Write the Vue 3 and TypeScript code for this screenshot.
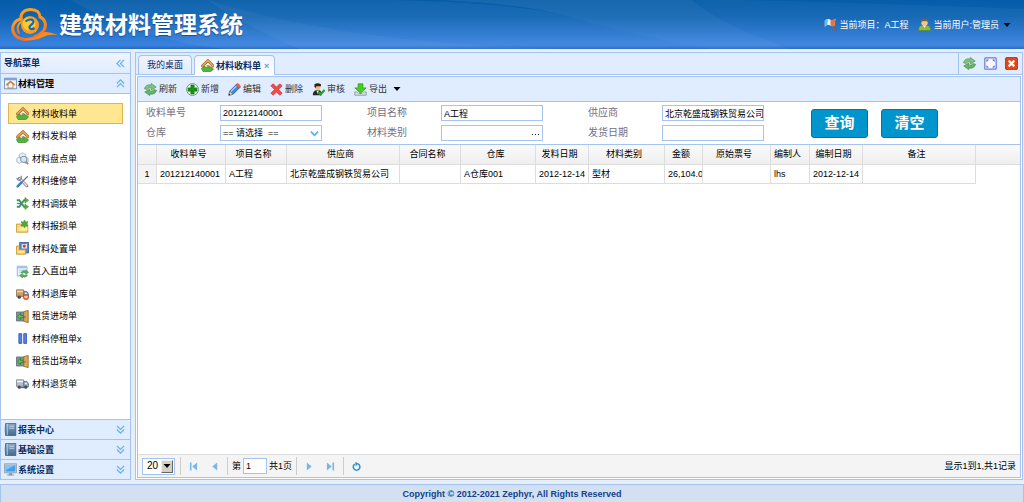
<script setup lang="ts">
import { ref } from 'vue'

interface Entry { icon: string; text: string }
interface Column { title: string; width: number; value: string }

const menu: Entry[] = [
  { icon: 'house', text: '材料收料单' },
  { icon: 'house', text: '材料发料单' },
  { icon: 'boxes', text: '材料盘点单' },
  { icon: 'tools', text: '材料维修单' },
  { icon: 'shuffle', text: '材料调拨单' },
  { icon: 'folderstar', text: '材料报损单' },
  { icon: 'folderbook', text: '材料处置单' },
  { icon: 'sheet', text: '直入直出单' },
  { icon: 'truckout', text: '材料退库单' },
  { icon: 'door', text: '租赁进场单' },
  { icon: 'pause', text: '材料停租单x' },
  { icon: 'door', text: '租赁出场单x' },
  { icon: 'truck', text: '材料退货单' },
]

const sections: Entry[] = [
  { icon: 'book', text: '报表中心' },
  { icon: 'book', text: '基础设置' },
  { icon: 'monitor', text: '系统设置' },
]

const actions: Entry[] = [
  { icon: 'refresh', text: '刷新' },
  { icon: 'add', text: '新增' },
  { icon: 'pencil', text: '编辑' },
  { icon: 'cross', text: '删除' },
  { icon: 'audit', text: '审核' },
  { icon: 'export', text: '导出' },
]

const columns: Column[] = [
  { title: '收料单号', width: 69, value: '201212140001' },
  { title: '项目名称', width: 61, value: 'A工程' },
  { title: '供应商', width: 113, value: '北京乾盛成钢铁贸易公司' },
  { title: '合同名称', width: 61, value: '' },
  { title: '仓库', width: 75, value: 'A仓库001' },
  { title: '发料日期', width: 53, value: '2012-12-14' },
  { title: '材料类别', width: 76, value: '型材' },
  { title: '金额', width: 38, value: '26,104.0' },
  { title: '原始票号', width: 68, value: '' },
  { title: '编制人', width: 39, value: 'lhs' },
  { title: '编制日期', width: 53, value: '2012-12-14' },
  { title: '备注', width: 113, value: '' },
]

const selected = ref(0)
const code = ref('201212140001')
const project = ref('A工程')
const supplier = ref('北京乾盛成钢铁贸易公司')
const category = ref('')
const shipDate = ref('')
const pageNo = ref('1')

function clearForm(): void {
  code.value = ''
  project.value = ''
  supplier.value = ''
  category.value = ''
  shipDate.value = ''
}
</script>

<template>
  <div class="page">
    <svg class="defs" aria-hidden="true">
      <defs>
        <linearGradient id="g-logo" x1="0" y1="0" x2="0" y2="1">
          <stop offset="0" stop-color="#ffa01c" /><stop offset="1" stop-color="#f5701a" />
        </linearGradient>
        <linearGradient id="g-book" x1="0" y1="0" x2="0" y2="1">
          <stop offset="0" stop-color="#86a9c8" /><stop offset="1" stop-color="#44698f" />
        </linearGradient>
      </defs>
      <symbol id="i-house" viewBox="0 0 16 16">
        <path d="M3.500 8v6.500h10V8l-5-4.500z" fill="#fdf6e6" stroke="#c9a06a" />
        <path d="M1.500 8.500L8.500 2l6.500 6.500" fill="none" stroke="#a9692a" stroke-width="3.400" stroke-linecap="round" />
        <path d="M1.500 8.500L8.500 2l6.500 6.500" fill="none" stroke="#e3a55d" stroke-width="1.800" stroke-linecap="round" />
        <path d="M7 7.500h3v2.500H7z" fill="#c08a5c" />
        <path d="M.500 11.500l4.500-3v2h5v-2l5.500 3.800-3.500 3-9.500.2z" fill="#55b441" stroke="#2f8a27" stroke-width=".8" />
      </symbol>
      <symbol id="i-home" viewBox="0 0 16 16">
        <path d="M.5 1.500h15v13H.5z" fill="#eaf2fb" stroke="#5b80ad" />
        <path d="M.5 1.500h15v2.500H.5z" fill="#7ba3d4" />
        <path d="M5 9v4.500h6V9" fill="#fff" stroke="#b27c3c" />
        <path d="M3 10l5-4.500 5 4.500" fill="none" stroke="#c8803a" stroke-width="2" />
      </symbol>
      <symbol id="i-boxes" viewBox="0 0 16 16">
        <path d="M4 3l4-2 4 2v4l-4 2-4-2zM1 8l3-2 4 2v4l-4 2-3-2zM8 8l4-2 3 2v4l-3 2-4-2z" fill="#eef1f5" stroke="#9ba6b5" stroke-width=".9" />
        <circle cx="9.500" cy="9" r="3.800" fill="#cfe7fa" stroke="#8299b5" stroke-width="1.300" />
        <path d="M12 12l3 3" stroke="#b4824b" stroke-width="2" />
      </symbol>
      <symbol id="i-tools" viewBox="0 0 16 16">
        <path d="M4 4l9.500 9.500" stroke="#7e8894" stroke-width="3.400" stroke-linecap="round" />
        <path d="M4 4l9.500 9.500" stroke="#e1e6eb" stroke-width="1.700" />
        <path d="M1 3.500q1 4 4 2.500l1.500-1.500V1" fill="none" stroke="#87929f" stroke-width="1.700" />
        <path d="M14.500 1.500L7 9" stroke="#68737f" stroke-width="1.500" />
        <path d="M6.500 9.500L2 14" stroke="#3c7bd2" stroke-width="3" stroke-linecap="round" />
      </symbol>
      <symbol id="i-shuffle" viewBox="0 0 16 16">
        <path d="M1 4h3l6 8h2M1 12h3l6-8h2" fill="none" stroke="#3c9161" stroke-width="2.200" />
        <path d="M11 .500l4.500 3.500L11 7.500zM11 8.500l4.500 3.500-4.500 3.500z" fill="#59b83c" stroke="#2e7d28" stroke-width=".6" />
        <path d="M1 8h6" stroke="#5277bd" stroke-width="1.500" />
      </symbol>
      <symbol id="i-folderstar" viewBox="0 0 16 16">
        <path d="M.5 15V5h5.500l1 2h7.500v8z" fill="#ffda73" stroke="#c98e29" />
        <path d="M3 9h11v4H3z" fill="#fff0a9" />
        <path d="M10.500 0l1.300 2.500 3-.4-1.300 2.700 1.300 2.700-3-.4-1.300 2.500-1.300-2.500-3 .4 1.300-2.700-1.300-2.700 3 .4z" fill="#4fad3b" stroke="#2c8329" stroke-width=".6" />
      </symbol>
      <symbol id="i-folderbook" viewBox="0 0 16 16">
        <path d="M4.500.5h11v13h-11z" fill="#5587cf" stroke="#2e549c" />
        <path d="M7 2.500h6.500V8H7z" fill="#e5ecf9" /><circle cx="10.200" cy="5" r="2" fill="#df3c35" />
        <path d="M.5 15V5H4v4.500h8V15z" fill="#ffd76b" stroke="#c38a2d" />
        <path d="M3 12h7" stroke="#fff1b5" stroke-width="2" />
      </symbol>
      <symbol id="i-sheet" viewBox="0 0 16 16">
        <path d="M1.500 1.500h12v12h-12z" fill="#e4effb" stroke="#8eabd2" />
        <path d="M2 3h11" stroke="#9ec0e9" stroke-width="2" />
        <path d="M4 6.500h7M4 9h3" stroke="#b2c7df" />
        <path d="M6 9.500q3-4 6-2V6l3.500 3-3.500 2.500V10q-3-1.500-6-.5zM14 13q-3 3-6 1.500V16l-3.500-3L8 10.500V12q3 1.500 6 1z" fill="#59b651" stroke="#278838" stroke-width=".6" />
      </symbol>
      <symbol id="i-truck" viewBox="0 0 16 16">
        <path d="M.5 3.500h9v8h-9z" fill="#b9bec5" stroke="#747d89" />
        <path d="M1 5.500h8" stroke="#eef0f3" stroke-width="2" />
        <path d="M9.500 5.500h4l2 3v3.500h-6z" fill="#8fa9c9" stroke="#566f91" />
        <path d="M11 7h2l1 2h-3z" fill="#e6f3ff" />
        <circle cx="4" cy="12.500" r="2" fill="#454a52" /><circle cx="12" cy="12.500" r="2" fill="#454a52" />
        <path d="M5 13h5" stroke="#666" stroke-width="1.500" />
      </symbol>
      <symbol id="i-truckout" viewBox="0 0 16 16">
        <path d="M.5 3.500h9v8h-9z" fill="#d49b63" stroke="#85684c" />
        <path d="M1 5.500h8" stroke="#f3d2a9" stroke-width="2" />
        <path d="M9.500 5.500h4l2 3v3.500h-6z" fill="#7ca4dc" stroke="#486da6" />
        <path d="M11 7h2l1 2h-3z" fill="#e4f2ff" />
        <circle cx="4" cy="12.500" r="2" fill="#454a52" />
        <circle cx="12.300" cy="12.300" r="3.400" fill="#f06c38" stroke="#c03d1c" stroke-width=".7" />
        <path d="M10.300 12.300h4" stroke="#fff" stroke-width="1.500" />
      </symbol>
      <symbol id="i-door" viewBox="0 0 16 16">
        <path d="M.5 2.500h9.500v11H.5z" fill="#83909e" stroke="#5d6872" />
        <path d="M9.500 2l5.500-1.500v15l-5.500-1.500z" fill="#dba65d" stroke="#976125" />
        <circle cx="11" cy="8.500" r=".8" fill="#6b4012" />
        <path d="M1.500 8l4-4v2.500H9v3H5.500V12z" fill="#5fc047" stroke="#22762a" stroke-width=".8" />
      </symbol>
      <symbol id="i-pause" viewBox="0 0 16 16">
        <path d="M3.500 2h3.500v12H3.500zM9.500 2H13v12H9.500z" fill="#5a80e0" stroke="#2e51b4" />
      </symbol>
      <symbol id="i-book" viewBox="0 0 16 16">
        <path d="M2 .500h12.500v15H2q-1-7 0-15z" fill="url(#g-book)" stroke="#3f5e7d" />
        <path d="M4 1v14" stroke="#c9dbea" /><path d="M6.500 4h6M6.500 6.500h6" stroke="#cfe0ee" />
      </symbol>
      <symbol id="i-monitor" viewBox="0 0 16 16">
        <path d="M.5 1h15v11H.5z" fill="#c9d3dc" stroke="#8996a3" />
        <path d="M2 2.500h12v8H2z" fill="#3da1f2" /><path d="M2 2.500h12L2 9z" fill="#7cc6fa" />
        <path d="M6 12.500h4v1.500h2v1.500H4V14h2z" fill="#8b9398" />
      </symbol>
      <symbol id="i-refresh" viewBox="0 0 16 16">
        <path d="M.5 7q2-6 8.500-4.500V.500L15 5 9 8.500V6Q5 5 4 8z" fill="#7dc579" stroke="#4a9651" stroke-width=".8" />
        <path d="M15.500 9q-2 6-8.500 4.500v2L1 11l6-3.500V10q4 1 5-2z" fill="#66b565" stroke="#3f8b4a" stroke-width=".8" />
      </symbol>
      <symbol id="i-add" viewBox="0 0 16 16">
        <circle cx="8" cy="8" r="7.300" fill="#eff8ed" stroke="#4b8a4a" stroke-width="1" />
        <path d="M6 2.500h4V6h3.500v4H10v3.500H6V10H2.500V6H6z" fill="#159415" stroke="#086a09" stroke-width=".7" />
      </symbol>
      <symbol id="i-pencil" viewBox="0 0 16 16">
        <path d="M1 15l1-5L10.500 1.500l4 4L6 14z" fill="#3d8ae4" stroke="#2157a3" />
        <path d="M3.500 10.500l8-8" stroke="#a7d0fa" stroke-width="1.500" />
        <path d="M1 15l1-5 4 4z" fill="#f6d8a2" stroke="#8b6942" stroke-width=".6" />
        <path d="M9.500 2.500l2-2q2 0 4 4l-2 2z" fill="#ed6146" stroke="#a73e30" stroke-width=".6" />
        <path d="M1 15l.5-2 1.500 1.500z" fill="#222" />
      </symbol>
      <symbol id="i-cross" viewBox="0 0 16 16">
        <path d="M1 3.500L4 1l4 4 4-4 3 2.500L10.500 8l4.500 4.500-3 2.500-4-4-4 4-3-2.500L5.500 8z" fill="#f34a48" stroke="#d3302e" stroke-width=".8" />
      </symbol>
      <symbol id="i-audit" viewBox="0 0 16 16">
        <path d="M1 15q0-5 4-6h4q3 1 3 6z" fill="#282828" />
        <circle cx="7" cy="5" r="3.500" fill="#f0bd81" />
        <path d="M3 5V1.500q4-2.500 8 0V4H5v2z" fill="#302216" />
        <path d="M5.500 9.500l1.500 4 1.500-4z" fill="#fff" />
        <path d="M7.500 11l3 3L15.500 8.500" fill="none" stroke="#29a42b" stroke-width="2.800" />
      </symbol>
      <symbol id="i-export" viewBox="0 0 16 16">
        <path d="M1 11h3l2 2h4l2-2h3v4H1z" fill="#dce1e2" stroke="#849092" />
        <path d="M5 1h6v5h4l-7 6.500L1 6h4z" fill="#45ce1a" stroke="#259411" stroke-width=".8" />
      </symbol>
      <symbol id="i-full" viewBox="0 0 16 16">
        <rect x="1" y="1" width="14" height="14" rx="1" fill="#f5f8ff" stroke="#6b7ad6" stroke-width="1.500" />
        <path d="M3 6V3h3zM10 3h3v3zM13 10v3h-3zM6 13H3v-3z" fill="#4658b9" />
      </symbol>
      <symbol id="i-close" viewBox="0 0 16 16">
        <rect x=".5" y=".5" width="15" height="15" rx="2" fill="#dd481d" stroke="#a22c0c" />
        <path d="M4.500 4.500l7 7M11.500 4.500l-7 7" stroke="#fff" stroke-width="2.800" />
      </symbol>
      <symbol id="i-flag" viewBox="0 0 16 16">
        <path d="M14 1l-2 14.500" stroke="#a4582a" stroke-width="2" />
        <path d="M1 3q4-3 7-1t6-1l-1 8q-3 2-6 0t-6 2z" fill="#edf3fc" />
        <path d="M8 2q3 1 6-1l-1 8q-3 2-5 0z" fill="#e57348" /><path d="M1 3q2-1.500 4-1.500L4 8.500 1 10z" fill="#65bff1" />
      </symbol>
      <symbol id="i-user" viewBox="0 0 16 16">
        <path d="M.5 15.500q0-6 5-6.500h5q5 .5 5 6.500z" fill="#8cba45" stroke="#5c8229" stroke-width=".8" />
        <path d="M6 9h4l-2 3z" fill="#fff" />
        <circle cx="8" cy="5.500" r="4" fill="#f0c797" />
        <path d="M3.700 5.500Q3.500.5 8 .500t4.300 5L11 4H5.500z" fill="#8a5c34" />
      </symbol>
      <symbol id="i-up" viewBox="0 0 10 10">
        <path d="M1 5l4-4 4 4M1 9l4-4 4 4" fill="none" stroke="#64b0ea" stroke-width="1.300" />
      </symbol>
      <symbol id="i-down" viewBox="0 0 10 10">
        <path d="M1 1l4 4 4-4M1 5l4 4 4-4" fill="none" stroke="#64b0ea" stroke-width="1.300" />
      </symbol>
      <symbol id="i-left" viewBox="0 0 10 10">
        <path d="M5 1L1 5l4 4M9 1L5 5l4 4" fill="none" stroke="#64b0ea" stroke-width="1.300" />
      </symbol>
      <symbol id="i-caret" viewBox="0 0 8 8"><path d="M.5 2h7L4 6z" fill="#000" /></symbol>
      <symbol id="i-first" viewBox="0 0 10 10"><path d="M1 .500h1.800v9H1zM9 .500v9L3.500 5z" fill="#79b9e9" /></symbol>
      <symbol id="i-prev" viewBox="0 0 10 10"><path d="M8 .500v9L2.500 5z" fill="#79b9e9" /></symbol>
      <symbol id="i-next" viewBox="0 0 10 10"><path d="M2 .500v9L7.500 5z" fill="#79b9e9" /></symbol>
      <symbol id="i-last" viewBox="0 0 10 10"><path d="M7.200.500H9v9H7.200zM1 .500v9L6.500 5z" fill="#79b9e9" /></symbol>
      <symbol id="i-reload" viewBox="0 0 10 10">
        <path d="M7 2.200A3.700 3.700 0 1 1 3 2.300" fill="none" stroke="#2e90d5" stroke-width="1.700" />
        <path d="M3.500 0l4 1.800L4 4.600z" fill="#2e90d5" />
      </symbol>
    </svg>

    <header class="banner">
      <svg class="waves" viewBox="0 0 1024 49" preserveAspectRatio="none" aria-hidden="true">
        <g fill="#fff">
          <path d="M392 0Q500 2 560 14Q630 36 710 49H300Q240 24 207 0z" opacity=".05" />
          <path d="M560 14Q630 36 710 49H790Q720 24 692 0H440Q510 3 560 14z" opacity=".07" />
          <path d="M692 0Q720 24 790 49H1024V9Q850 2 740 0z" opacity=".04" />
          <path d="M0 0H70Q110 22 150 34T225 49H305Q235 24 207 0H60z" opacity=".05" />
          <path d="M207 0Q235 24 305 49H560Q350 44 207 0z" opacity=".04" />
        </g>
      </svg>
      <svg class="logo" viewBox="0 0 48 34" aria-hidden="true">
        <g fill="none" stroke="url(#g-logo)" stroke-linecap="round">
          <path d="M10 11C9 5 14 1.500 19.500 1.500 26 1.500 29 5 29 9c5 2 7 8 4 13-2 3-5 5-9 6.500" stroke-width="3" />
          <path d="M10 11C4 12 0 18 2.500 24.500 5 31 14 33 22 30" stroke-width="3" />
          <path d="M13 13c-6 1-8 7-5 12" stroke-width="2" />
        </g>
        <path d="M10 30q12 3 20-5 5-3 17 2-9-1-15 2-10 6-22 1z" fill="#fb8a1c" />
        <circle cx="19" cy="17" r="9" fill="#fb9a18" />
        <circle cx="18" cy="16" r="6.500" fill="#ffc928" />
        <path d="M14.500 13.500q4-3.500 7-1.500 2.500 2-1.500 5-2.500 2-1 3.500t4.500-.5" fill="none" stroke="#1768b8" stroke-width="2.200" />
      </svg>
      <h1>建筑材料管理系统</h1>
      <div class="account">
        <span class="who"><svg class="ico"><use href="#i-flag" /></svg>当前项目：A工程</span>
        <button class="who" type="button">
          <svg class="ico"><use href="#i-user" /></svg>当前用户:管理员<svg class="caret"><use href="#i-caret" /></svg>
        </button>
      </div>
    </header>

    <div class="body">
      <aside class="side">
        <div class="side-head navy">导航菜单<button type="button" aria-label="收起"><svg class="arrow"><use href="#i-left" /></svg></button></div>
        <div class="side-head">
          <svg class="ico"><use href="#i-home" /></svg>材料管理
          <button type="button" aria-label="折叠"><svg class="arrow"><use href="#i-up" /></svg></button>
        </div>
        <nav class="menu">
          <a v-for="(m, i) in menu" :key="m.text" href="#" :class="{ on: i === selected }" @click.prevent="selected = i">
            <svg class="ico"><use :href="'#i-' + m.icon" /></svg>{{ m.text }}
          </a>
        </nav>
        <div v-for="s in sections" :key="s.text" class="side-head foot navy">
          <svg class="ico"><use :href="'#i-' + s.icon" /></svg>{{ s.text }}
          <button type="button" aria-label="展开"><svg class="arrow"><use href="#i-down" /></svg></button>
        </div>
      </aside>

      <main class="main">
        <div class="tabbar">
          <div class="tabs">
            <button class="tab" type="button">我的桌面</button>
            <button class="tab active" type="button">
              <svg class="ico"><use href="#i-house" /></svg>材料收料单<span class="x">×</span>
            </button>
          </div>
          <div class="win">
            <button type="button" aria-label="刷新"><svg class="ico"><use href="#i-refresh" /></svg></button>
            <button type="button" aria-label="全屏"><svg class="ico"><use href="#i-full" /></svg></button>
            <button type="button" aria-label="关闭"><svg class="ico"><use href="#i-close" /></svg></button>
          </div>
        </div>

        <section class="panel">
          <div class="toolbar">
            <button v-for="a in actions" :key="a.text" type="button">
              <svg class="ico"><use :href="'#i-' + a.icon" /></svg>{{ a.text }}<svg v-if="a.icon === 'export'" class="caret"><use href="#i-caret" /></svg>
            </button>
          </div>

          <form class="query" @submit.prevent>
            <div class="fields">
              <label for="code">收料单号</label><input id="code" v-model="code" type="text">
              <label class="next" for="project">项目名称</label><input id="project" v-model="project" type="text">
              <label class="next" for="supplier">供应商</label><input id="supplier" v-model="supplier" type="text">
              <label for="store">仓库</label>
              <div class="combo">
                <select id="store"><option>==&nbsp;请选择&nbsp;&nbsp;==</option></select>
                <svg viewBox="0 0 10 10" aria-hidden="true"><path d="M1 3l4 4 4-4" /></svg>
              </div>
              <label class="next" for="category">材料类别</label>
              <div class="combo">
                <input id="category" v-model="category" type="text">
                <button class="dots" type="button" aria-label="选择类别"><i /><i /><i /></button>
              </div>
              <label class="next" for="date">发货日期</label><input id="date" v-model="shipDate" type="text">
            </div>
            <div class="buttons">
              <button type="submit">查询</button>
              <button type="button" @click="clearForm">清空</button>
            </div>
          </form>

          <div class="grid">
            <table>
              <colgroup>
                <col class="num-col">
                <col v-for="c in columns" :key="c.title" :style="{ width: c.width + 'px' }">
                <col>
              </colgroup>
              <thead>
                <tr><th /><th v-for="c in columns" :key="c.title">{{ c.title }}</th><th class="rest" /></tr>
              </thead>
              <tbody>
                <tr><td class="num">1</td><td v-for="c in columns" :key="c.title">{{ c.value }}</td><td class="rest" /></tr>
              </tbody>
            </table>
          </div>

          <div class="pager">
            <div class="size">
              <select aria-label="每页条数"><option>20</option></select>
              <span class="drop"><svg class="caret"><use href="#i-caret" /></svg></span>
            </div>
            <i class="sep" />
            <button type="button" aria-label="首页"><svg class="arrow"><use href="#i-first" /></svg></button>
            <button type="button" aria-label="上一页"><svg class="arrow"><use href="#i-prev" /></svg></button>
            <i class="sep" />
            <div class="jump"><label for="page">第</label><input id="page" v-model="pageNo" type="text"><span>共1页</span></div>
            <i class="sep" />
            <button type="button" aria-label="下一页"><svg class="arrow"><use href="#i-next" /></svg></button>
            <button type="button" aria-label="末页"><svg class="arrow"><use href="#i-last" /></svg></button>
            <i class="sep" />
            <button type="button" aria-label="重新加载"><svg class="arrow"><use href="#i-reload" /></svg></button>
            <span class="info">显示1到1,共1记录</span>
          </div>
        </section>
      </main>
    </div>

    <footer class="bottom">Copyright © 2012-2021 Zephyr, All Rights Reserved</footer>
  </div>
</template>

<style>
html, body, #app { height: 100%; margin: 0; }
</style>

<style scoped>
* { box-sizing: border-box; }
.page {
  min-height: 100%;
  display: flex;
  flex-direction: column;
  background: #e6eef8;
  color: #000;
  font: 9px/14px "Liberation Sans", "Noto Sans CJK SC", sans-serif;
}
.defs { position: absolute; width: 0; height: 0; }
button, input, select { font: inherit; color: inherit; margin: 0; padding: 0; border: 0; background: none; border-radius: 0; outline: 0; }
button { display: inline-flex; align-items: center; cursor: pointer; white-space: nowrap; }
.ico { width: 13px; height: 13px; flex: none; }
.arrow { width: 9px; height: 9px; flex: none; display: block; }
.caret { width: 8px; height: 8px; flex: none; }

.banner {
  position: relative;
  height: 49px;
  display: flex;
  align-items: center;
  padding: 0 13px 0 11px;
  background: linear-gradient(#055ca8, #0f64b4 35%, #3a83e0 92%, #2468bd);
  color: #fff;
}
.waves { position: absolute; inset: 0; width: 100%; height: 100%; }
.logo { position: relative; width: 48px; height: 34px; }
h1 { position: relative; margin: 0; font-size: 23px; line-height: 32px; font-weight: 700; padding-top: 1px; white-space: nowrap; text-shadow: 0 1px 1px #134f94; }
.account { position: relative; margin-left: auto; display: flex; align-items: center; gap: 10px; }
.who { display: flex; align-items: center; gap: 2px; }
.who .caret { margin-left: 2px; }

.body { flex: 1; display: flex; gap: 4px; padding: 3px 1px 4px 0; }
.side { width: 131px; flex: none; display: flex; flex-direction: column; background: #fff; border: 1px solid #a4c3ee; }
.side-head {
  height: 20px;
  display: flex;
  align-items: center;
  gap: 1px;
  padding: 0 5px 0 3px;
  font-weight: 700;
  background: #e0ecff;
  border-bottom: 1px solid #a4c3ee;
}
.side-head:first-child { height: 21px; background: linear-gradient(#eff5ff, #e0ecff); }
.side-head button { margin-left: auto; }
.side-head.foot { border-bottom: 0; border-top: 1px solid #a4c3ee; }
.navy { color: #0e2d5f; }
.menu { flex: 1; padding: 9px 7px 25px; display: flex; flex-direction: column; justify-content: space-between; }
.menu a {
  height: 21px;
  display: flex;
  align-items: center;
  gap: 3px;
  padding-left: 7px;
  color: #000;
  text-decoration: none;
  border: 1px solid transparent;
}
.menu a.on { background: #ffe690; border-color: #e0b54c; }

.main { flex: 1; min-width: 0; display: flex; flex-direction: column; background: #fff; border: 1px solid #a4c3ee; }
.tabbar { height: 22px; display: flex; background: #e0ecff; border-bottom: 1px solid #a4c3ee; }
.tabs { flex: 1; display: flex; align-items: flex-end; gap: 2px; padding-left: 2px; }
.tab {
  height: 19px;
  padding: 0 8px;
  color: #0e2d5f;
  border: 1px solid #a4c3ee;
  border-bottom: 0;
  border-radius: 4px 4px 0 0;
  background: linear-gradient(#eff5ff, #e0ecff);
}
.tab.active { height: 20px; margin-bottom: -1px; padding: 0 5px 0 6px; gap: 2px; font-weight: 700; background: linear-gradient(#eff5ff, #fff); }
.tab .x { margin-left: 1px; color: #6f9bd1; }
.win { display: flex; align-items: center; gap: 8px; padding: 0 4px; border-left: 1px solid #a4c3ee; }
.panel { flex: 1; margin: 1px; display: flex; flex-direction: column; border: 1px solid #a4c3ee; }
.toolbar { height: 25px; display: flex; align-items: center; gap: 9px; padding-left: 6px; color: #333; background: #e0ecff; border-bottom: 1px solid #a4c3ee; }
.toolbar button { gap: 2px; }
.toolbar .caret { margin-left: 4px; }

.query { display: flex; align-items: center; gap: 47px; padding: 3px 0 3px 8px; }
.fields { display: grid; grid-template-columns: 74px 102px 119px 102px 119px 102px; row-gap: 4px; align-items: center; }
.fields label { font-size: 10px; line-height: 16px; color: #776e80; }
.fields .next { padding-left: 45px; }
.fields input, .fields select { display: block; width: 100%; height: 16px; min-width: 0; padding: 0 0 0 2px; background: #fff; border: 1px solid #a4c3ee; appearance: none; }
.combo { position: relative; height: 16px; }
.combo svg { position: absolute; right: 3px; top: 4px; width: 9px; height: 9px; fill: none; stroke: #5eaee8; stroke-width: 2; pointer-events: none; }
.dots { position: absolute; right: 4px; top: 2px; height: 14px; gap: 2px; }
.dots i { width: 1px; height: 1px; background: #222; }
.buttons { display: flex; gap: 13px; }
.buttons button { justify-content: center; width: 57px; height: 29px; font-size: 15px; font-weight: 700; color: #fff; background: #0095cd; border: 1px solid #0076a3; border-radius: 3px; }

.grid { flex: 1; border-top: 1px solid #a4c3ee; }
table { width: 100%; table-layout: fixed; border-collapse: separate; border-spacing: 0; }
.num-col { width: 19px; }
th, td { padding: 0; white-space: nowrap; overflow: hidden; font-weight: 400; border-right: 1px solid #ddd; border-bottom: 1px solid #ddd; }
th { height: 20px; padding: 0 5px 1px 0; text-align: center; background: linear-gradient(#fafafa, #efefef); }
td { height: 19px; padding-left: 3px; }
td.num { padding: 0; text-align: center; background: #f4f4f4; }
th.rest { border-right: 0; }
td.rest { border: 0; }

.pager { height: 23px; display: flex; align-items: center; padding: 0 4px; background: #f4f4f4; border-top: 1px solid #ddd; }
.pager .arrow { margin: 0 6px; }
.sep { width: 1px; height: 18px; background: #ccc; margin: 0 2px; }
.size { position: relative; width: 33px; height: 17px; margin-right: 3px; border: 1px solid #a4c3ee; background: #fff; }
.size select { display: block; width: 100%; height: 15px; padding-left: 4px; font-size: 10px; appearance: none; }
.drop { position: absolute; top: 1px; right: 1px; width: 12px; height: 13px; display: flex; align-items: center; justify-content: center; background: #d4d0c8; border: 1px solid; border-color: #eee #666 #666 #eee; pointer-events: none; }
.jump { display: flex; align-items: center; gap: 2px; padding: 0 2px; }
.jump input { width: 24px; height: 16px; padding: 0 2px; background: #fff; border: 1px solid #a4c3ee; }
.info { margin-left: auto; }

.bottom { height: 18px; display: flex; align-items: center; justify-content: center; font-weight: 700; color: #15428b; background: #d2e0f2; border: 1px solid #a4c3ee; border-bottom: 0; }
</style>
